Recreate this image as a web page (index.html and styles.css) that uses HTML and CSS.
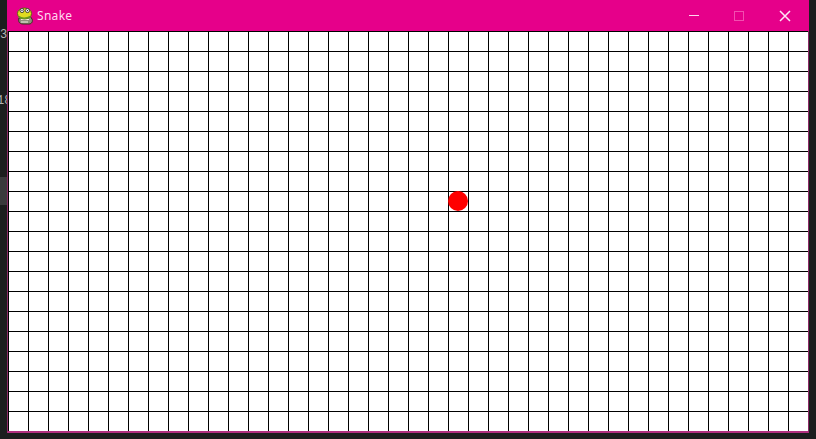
FILE: index.html
```html
<!DOCTYPE html>
<html lang="en">

<head>
    <meta charset="UTF-8">
    <meta name="viewport" content="width=device-width, initial-scale=1.0">
    <title>Snake</title>
    <link rel="stylesheet" href="styles.css">
</head>

<body>
    <div class="editor-behind">
        <span class="line-no line-no-a">30</span>
        <span class="line-no line-no-b">18</span>
        <div class="active-line"></div>
    </div>

    <div class="window">
        <div class="titlebar">
            <svg class="app-icon" width="18" height="18" viewBox="0 0 18 18">
                <path d="M3 11c-1 3 0 6 4 6h6c3 0 4-3 3-5l-2-3z" fill="#8f8f7c" stroke="#34341c" stroke-width="1"/>
                <path d="M5 12.5h8M5 15h7" stroke="#f0f0e0" stroke-width="1.2"/>
                <ellipse cx="8.5" cy="6.5" rx="7" ry="5.5" fill="#e0dc20" stroke="#5c6a10" stroke-width="1"/>
                <path d="M2.5 9.5c3 2 8 2 12 0" stroke="#6a9a20" stroke-width="1.6" fill="none"/>
                <circle cx="6" cy="3.6" r="2" fill="#fff" stroke="#222" stroke-width=".8"/>
                <circle cx="11.5" cy="3.6" r="2" fill="#fff" stroke="#222" stroke-width=".8"/>
                <circle cx="6" cy="3.6" r=".7" fill="#111"/>
                <circle cx="11.5" cy="3.6" r=".7" fill="#111"/>
            </svg>
            <span class="title">Snake</span>
            <div class="controls">
                <svg class="ctl" width="46" height="30" viewBox="0 0 46 30">
                    <path d="M19 14.5h10" stroke="#ffd6ee" stroke-width="1"/>
                </svg>
                <svg class="ctl" width="46" height="30" viewBox="0 0 46 30">
                    <rect x="18.5" y="10.5" width="9" height="9" fill="none" stroke="#f24fb0" stroke-width="1"/>
                </svg>
                <svg class="ctl" width="46" height="30" viewBox="0 0 46 30">
                    <path d="M18 10l10 10M28 10l-10 10" stroke="#ffe6f5" stroke-width="1.5"/>
                </svg>
            </div>
        </div>
        <div class="board">
            <div class="food"></div>
        </div>
    </div>
</body>

</html>
```

FILE: styles.css
```css
body {
    margin: 0;
    width: 816px;
    height: 439px;
    overflow: hidden;
    background-color: #1c1e1e;
    font-family: "Noto Sans", sans-serif;
}

.editor-behind {
    position: absolute;
    left: 0;
    top: 0;
    width: 8px;
    height: 439px;
    overflow: hidden;
}

.line-no {
    position: absolute;
    font-family: "Liberation Mono", monospace;
    font-size: 12px;
    line-height: 16px;
    color: #b4b4b4;
}

.line-no-a {
    left: 0;
    top: 27px;
}

.line-no-b {
    left: -3px;
    top: 93px;
}

.active-line {
    position: absolute;
    left: 0;
    top: 177px;
    width: 8px;
    height: 28px;
    background-color: #3a3a3c;
}

.window {
    position: absolute;
    left: 7px;
    top: 0;
    width: 800px;
    border: 1px solid #8c2a66;
    border-top: none;
    border-bottom-width: 2px;
    border-bottom-color: #b0307f;
}

.titlebar {
    display: flex;
    align-items: center;
    height: 31px;
    margin: 0 -1px;
    padding: 0 1px 0 9px;
    background-color: #e6008a;
}

.app-icon {
    width: 18px;
    height: 18px;
}

.title {
    margin-left: 3px;
    font-size: 12px;
    color: #ffd9f0;
    letter-spacing: .3px;
}

.controls {
    display: flex;
    margin-left: auto;
}

.ctl {
    display: block;
}

.board {
    position: relative;
    height: 400px;
    background-color: #fff;
    background-image:
        linear-gradient(to right, #000 1px, transparent 1px),
        linear-gradient(to bottom, #000 1px, transparent 1px);
    background-size: 20px 20px;
}

.food {
    position: absolute;
    left: 440px;
    top: 160px;
    width: 20px;
    height: 20px;
    border-radius: 50%;
    background-color: #f00;
}
```
